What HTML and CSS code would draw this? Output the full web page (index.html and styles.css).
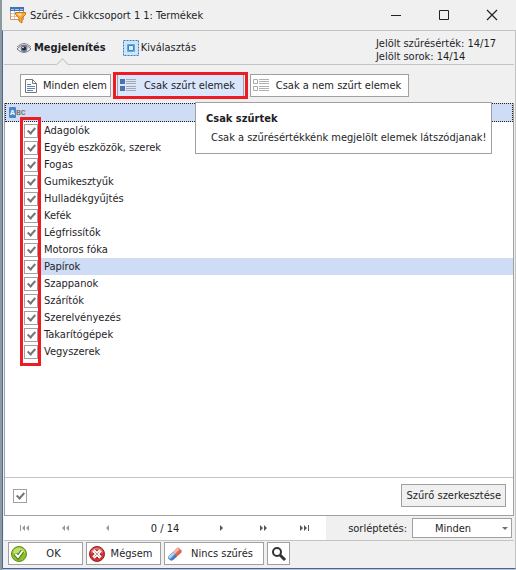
FILE: index.html
```html
<!DOCTYPE html>
<html lang="hu">
<head>
    <meta charset="UTF-8">
    <meta name="viewport" content="width=device-width, initial-scale=1.0">
    <title>Szűrés - Cikkcsoport 1 1: Termékek</title>
    <link rel="stylesheet" href="styles.css">
</head>
<body>
    <div class="window">
        <header class="titlebar">
            <svg class="title-icon" width="18" height="18" viewBox="0 0 18 18">
                <path d="M.5 2.500h13v11H.5z" fill="#fff" stroke="#d9935a"/>
                <path d="M0 1h14v4H0z" fill="#3f74b8"/>
                <path d="M1 3h3v1H1zM5 3h4v1H5zM10 3h3v1h-3z" fill="#a9c8ea"/>
                <path d="M4.500 5v8M9.500 5v8M1 7.500h12M1 10.500h12" stroke="#c3c7cf"/>
                <path d="M5.500 6.500h10v2l-3.500 3.500v5l-3-2v-3l-3.500-3.500z" fill="#f9a935" stroke="#c9731a"/>
                <path d="M7 7.500h5l-2 3z" fill="#ffdf9a"/>
            </svg>
            <span class="title">Szűrés - Cikkcsoport 1 1: Termékek</span>
            <button class="win-button" type="button" aria-label="Kis méret">
                <svg width="12" height="12" viewBox="0 0 12 12"><path d="M1 6.500h10" stroke="#222"/></svg>
            </button>
            <button class="win-button" type="button" aria-label="Teljes méret">
                <svg width="12" height="12" viewBox="0 0 12 12"><path d="M1.500 1.500h9v9h-9z" fill="none" stroke="#222"/></svg>
            </button>
            <button class="win-button" type="button" aria-label="Bezárás">
                <svg width="12" height="12" viewBox="0 0 12 12"><path d="M1 1l10 10M11 1L1 11" stroke="#222" stroke-width="1.200"/></svg>
            </button>
        </header>

        <div class="client">
            <nav class="tabs">
                <button class="tab active" type="button">
                    <svg width="16" height="12" viewBox="0 0 16 12">
                        <path d="M1 7Q8-1 15 7Q8 14 1 7z" fill="#f2f2f4" stroke="#74717a"/>
                        <path d="M1 5Q8-2 15 5" fill="none" stroke="#8d7a74"/>
                        <circle cx="8" cy="6.500" r="3.500" fill="#6d7ea3"/>
                        <circle cx="8" cy="6.500" r="2" fill="#222638"/>
                        <circle cx="7" cy="5.500" r="0.800" fill="#fff"/>
                    </svg>
                    Megjelenítés
                </button>
                <button class="tab" type="button">
                    <svg width="16" height="16" viewBox="0 0 16 16">
                        <path d="M.5.5h15v15H.5z" fill="#c9e6fa" stroke="#4577a8" stroke-dasharray="2 1"/>
                        <path d="M4.500 4.500h7v7h-7z" fill="#9fd0f2" stroke="#6aa5d8"/>
                        <path d="M5.500 5.500h5v5h-5z" fill="#d3ecfc" stroke="#3d80bd"/>
                    </svg>
                    Kiválasztás
                </button>
                <div class="counts">Jelölt szűrésérték: 14/17<br>Jelölt sorok: 14/14</div>
            </nav>

            <div class="toolbar">
                <button class="btn view-all" type="button">
                    <svg width="12" height="14" viewBox="0 0 12 14">
                        <path d="M.5.5h7l4 4v9H.5zM7.500.5v4h4" fill="#fff" stroke="#777"/>
                        <path d="M2 5.500h4M2 7.500h8M2 9.500h8M2 11.500h6" stroke="#5b87b8"/>
                    </svg>
                    <span>Minden elem</span>
                </button>
                <button class="btn view-filtered marked" type="button">
                    <svg width="16" height="13" viewBox="0 0 16 13">
                        <path d="M0 0h5v5H0zM0 7h5v5H0z" fill="#4e70ab"/>
                        <path d="M6 .5h10M6 2.500h10M6 4.500h10M6 7.500h10M6 9.500h10M6 11.500h10" stroke="#a6a8ae"/>
                    </svg>
                    <span>Csak szűrt elemek</span>
                </button>
                <button class="btn view-unfiltered" type="button">
                    <svg width="16" height="13" viewBox="0 0 16 13">
                        <path d="M.5.5h4v4h-4zM.5 7.500h4v4h-4z" fill="#fff" stroke="#aaa"/>
                        <path d="M6 .5h10M6 2.500h10M6 4.500h10M6 7.500h10M6 9.500h10M6 11.500h10" stroke="#b0b0b0"/>
                    </svg>
                    <span>Csak a nem szűrt elemek</span>
                </button>
                <div class="tooltip" role="tooltip">
                    <strong>Csak szűrtek</strong>
                    <p>Csak a szűrésértékkénk megjelölt elemek látszódjanak!</p>
                </div>
            </div>

            <main class="grid">
                <div class="filter-row"><span class="abc-a">A</span><span class="abc-bc">BC</span></div>
                <ul class="items">
                    <li><label><input type="checkbox" checked><span>Adagolók</span></label></li>
                    <li><label><input type="checkbox" checked><span>Egyéb eszközök, szerek</span></label></li>
                    <li><label><input type="checkbox" checked><span>Fogas</span></label></li>
                    <li><label><input type="checkbox" checked><span>Gumikesztyűk</span></label></li>
                    <li><label><input type="checkbox" checked><span>Hulladékgyűjtés</span></label></li>
                    <li><label><input type="checkbox" checked><span>Kefék</span></label></li>
                    <li><label><input type="checkbox" checked><span>Légfrissítők</span></label></li>
                    <li><label><input type="checkbox" checked><span>Motoros fóka</span></label></li>
                    <li class="selected"><label><input type="checkbox" checked><span>Papírok</span></label></li>
                    <li><label><input type="checkbox" checked><span>Szappanok</span></label></li>
                    <li><label><input type="checkbox" checked><span>Szárítók</span></label></li>
                    <li><label><input type="checkbox" checked><span>Szerelvényezés</span></label></li>
                    <li><label><input type="checkbox" checked><span>Takarítógépek</span></label></li>
                    <li><label><input type="checkbox" checked><span>Vegyszerek</span></label></li>
                </ul>
                <div class="grid-footer">
                    <input type="checkbox" aria-label="Szűrő bekapcsolva" checked>
                    <button class="btn edit-filter" type="button">Szűrő szerkesztése</button>
                </div>
            </main>

            <div class="pager">
                <div class="pager-buttons">
                    <button type="button" aria-label="Első" disabled>
                        <svg width="10" height="6" viewBox="0 0 10 6"><path d="M0 0h1v6H0zM5 0v6L2 3zM9 0v6L6 3z"/></svg>
                    </button>
                    <button type="button" aria-label="Előző oldal" disabled>
                        <svg width="8" height="6" viewBox="0 0 8 6"><path d="M3 0v6L0 3zM7 0v6L4 3z"/></svg>
                    </button>
                    <button type="button" aria-label="Előző" disabled>
                        <svg width="4" height="6" viewBox="0 0 4 6"><path d="M3 0v6L0 3z"/></svg>
                    </button>
                    <span class="position">0 / 14</span>
                    <button type="button" aria-label="Következő">
                        <svg width="4" height="6" viewBox="0 0 4 6"><path d="M0 0v6l3-3z"/></svg>
                    </button>
                    <button type="button" aria-label="Következő oldal">
                        <svg width="8" height="6" viewBox="0 0 8 6"><path d="M0 0v6l3-3zM4 0v6l3-3z"/></svg>
                    </button>
                    <button type="button" aria-label="Utolsó">
                        <svg width="10" height="6" viewBox="0 0 10 6"><path d="M0 0v6l3-3zM4 0v6l3-3zM8 0h1v6H8z"/></svg>
                    </button>
                </div>
                <label for="step">sorléptetés:</label>
                <div class="select-box">
                    <select id="step"><option>Minden</option></select>
                </div>
            </div>

            <footer class="actions">
                <button class="btn action" type="button">
                    <svg width="16" height="16" viewBox="0 0 16 16">
                        <circle cx="8" cy="8" r="7.500" fill="#8fbf2b" stroke="#5e8d16"/>
                        <path d="M2 7a6 5.500 0 0 1 12 0Q8 9 2 7z" fill="#bfe06c"/>
                        <path d="M4.500 8l2.500 3 4.500-6" fill="none" stroke="#4b7a12" stroke-width="4"/>
                        <path d="M4.500 8l2.500 3 4.500-6" fill="none" stroke="#fff" stroke-width="2"/>
                    </svg>
                    <span>OK</span>
                </button>
                <button class="btn action" type="button">
                    <svg width="16" height="16" viewBox="0 0 16 16">
                        <circle cx="8" cy="8" r="7.500" fill="#cf3330" stroke="#9c2222"/>
                        <path d="M2 7a6 5.500 0 0 1 12 0Q8 9 2 7z" fill="#e5736c"/>
                        <path d="M5 5l6 6M11 5l-6 6" stroke="#8e1b1b" stroke-width="5"/>
                        <path d="M4.500 4.500l7 7M11.500 4.500l-7 7" stroke="#fff" stroke-width="3.500"/>
                        <path d="M5.500 5.500l5 5M10.500 5.500l-5 5" stroke="#d98f8c"/>
                    </svg>
                    <span>Mégsem</span>
                </button>
                <button class="btn action wide" type="button">
                    <svg width="16" height="16" viewBox="0 0 16 16">
                        <path d="M1 11L10 2Q11 1 12 2L14.500 4.500Q15 6 14 7L6 14Q4 15 2.500 13.500L1 12z" fill="#e0644a"/>
                        <path d="M1 11L6 6l4 4.500L6 14Q4 15 2.500 13.500L1 12z" fill="#3f80cc"/>
                        <path d="M1 11L6 6l2 2-5 5z" fill="#a9d2f5"/>
                        <path d="M6 6l4.500-4.500 2 2L8 8z" fill="#f6b7a4"/>
                    </svg>
                    <span>Nincs szűrés</span>
                </button>
                <button class="btn search" type="button" aria-label="Keresés">
                    <svg width="16" height="16" viewBox="0 0 16 16">
                        <circle cx="6" cy="6" r="4" fill="none" stroke="#333" stroke-width="2"/>
                        <path d="M9 9l5 5" stroke="#333" stroke-width="3"/>
                    </svg>
                </button>
            </footer>
        </div>
    </div>
</body>
</html>
```

FILE: styles.css
```css
*, *::before, *::after {
    box-sizing: border-box;
}

body {
    margin: 0;
    padding-left: 2px;
    background: #8b9b9d;
    color: #1e1e28;
    font-family: "DejaVu Sans Condensed", "Noto Sans", sans-serif;
    font-size: 11px;
    line-height: 13px;
}

button, select, input {
    font: inherit;
    color: inherit;
    margin: 0;
}

button {
    border: 0;
    padding: 0;
    background: none;
}

svg {
    display: block;
    flex: none;
}

.window {
    display: flex;
    flex-direction: column;
    min-height: 100vh;
    background: #f0f0f0;
    border-bottom: 1px solid #c4c4c8;
}

.titlebar {
    display: flex;
    align-items: center;
    height: 30px;
    padding-left: 8px;
}

.title {
    flex: 1;
    padding-left: 2px;
}

.win-button {
    display: flex;
    align-items: center;
    justify-content: center;
    width: 48px;
    height: 30px;
}

.client {
    flex: 1;
    display: flex;
    flex-direction: column;
    padding: 0 1px 3px;
    border-top: 1px solid #c3c3c3;
    border-right: 1px solid #c3c3c3;
    border-left: 1px solid #4a6a9d;
    border-bottom: 1px solid #3e66a5;
}

/* tabs */
.tabs {
    display: flex;
    align-items: center;
    gap: 17px;
    height: 34px;
    padding: 0 18px 0 12px;
    border-bottom: 1px solid #c3c3c3;
}

.tab {
    position: relative;
    display: flex;
    align-items: center;
    gap: 2px;
    height: 33px;
}

.tab.active {
    font-weight: bold;
}

.tab.active::after {
    content: "";
    position: absolute;
    left: 42px;
    bottom: -5px;
    width: 9px;
    height: 9px;
    background: #f0f0f0;
    border-top: 1px solid #c3c3c3;
    border-left: 1px solid #c3c3c3;
    transform: rotate(45deg);
}

.counts {
    margin-left: auto;
    padding-top: 5px;
}

/* toolbar */
.btn {
    display: flex;
    align-items: center;
    height: 23px;
    border: 1px solid #a0a0a0;
    background: #fff;
    white-space: nowrap;
}

.btn span {
    flex: 1;
    text-align: center;
}

.toolbar {
    position: relative;
    display: flex;
    gap: 6px;
    padding: 9px 16px 6px;
}

.view-all {
    width: 91px;
    padding-left: 4px;
}

.view-all span {
    padding-left: 3px;
}

.view-filtered {
    position: relative;
    width: 127px;
    padding-left: 2px;
    background: #dae6fb;
}

.view-unfiltered {
    width: 159px;
    padding-left: 2px;
}

.marked::after {
    content: "";
    position: absolute;
    inset: -3px -5px -3px -5px;
    border: 3px solid #ed1c24;
}

.tooltip {
    position: absolute;
    z-index: 2;
    top: 37px;
    left: 191px;
    padding: 9px 4px 9px 10px;
    background: #fff;
    border: 1px solid #a0a0a0;
    white-space: nowrap;
}

.tooltip p {
    margin: 6px 0 0 5px;
}

/* list */
.grid {
    flex: 1;
    display: flex;
    flex-direction: column;
    background: #fff;
    border: 1px solid #a0a0a0;
    border-top: 0;
}

.filter-row {
    display: flex;
    align-items: center;
    height: 19px;
    padding-left: 3px;
    background: #cfdcf5;
    border: 1px dotted #222;
    font-family: "Liberation Mono", monospace;
    font-size: 8px;
    font-weight: bold;
    line-height: 11px;
    color: #777;
}

.abc-a {
    width: 7px;
    border-radius: 1px;
    background: #4a86c5;
    color: #fff;
    text-align: center;
}

.items {
    position: relative;
    flex: 1;
    margin: 0;
    padding: 0;
    list-style: none;
}

.items::after {
    content: "";
    position: absolute;
    top: -5px;
    left: 15px;
    width: 21px;
    height: 249px;
    border: 3px solid #ed1c24;
}

.items label {
    display: flex;
    align-items: center;
    height: 17px;
    padding-left: 19px;
}

.items span {
    flex: 1;
    padding: 2px 0 2px 3px;
    margin-left: 3px;
}

.selected span {
    background: #cfdcf5;
}

input[type="checkbox"] {
    appearance: none;
    display: grid;
    place-items: center;
    width: 14px;
    height: 14px;
    border: 1px solid #a0a0a0;
    background: #fff;
}

input[type="checkbox"]:checked::before {
    content: "";
    width: 5px;
    height: 8px;
    margin-bottom: 2px;
    border: solid #777;
    border-width: 0 2px 2px 0;
    transform: rotate(42deg);
}

.grid-footer {
    display: flex;
    align-items: center;
    justify-content: space-between;
    height: 38px;
    padding: 0 7px 2px 8px;
    border-top: 1px solid #c3c3c3;
}

.edit-filter {
    padding: 0 4px;
    background: #f0f0f0;
}

/* pager */
.pager {
    display: flex;
    align-items: center;
    height: 25px;
    border-bottom: 1px solid #c3c3c3;
}

.pager-buttons {
    flex: 1;
    display: flex;
    align-items: center;
    align-self: stretch;
    background: #fff;
}

.pager-buttons button {
    flex: 1;
    display: flex;
    align-items: center;
    justify-content: center;
    fill: #555;
}

.pager-buttons button:disabled {
    fill: #999;
}

.position {
    width: 73px;
    text-align: center;
}

.pager label {
    padding: 0 5px 0 22px;
}

.select-box {
    position: relative;
    margin-right: 2px;
}

.select-box::after {
    content: "";
    position: absolute;
    top: 9px;
    right: 4px;
    border: 3px solid transparent;
    border-top-color: #707070;
    pointer-events: none;
}

.pager select {
    appearance: none;
    display: block;
    width: 100px;
    height: 20px;
    padding: 0 18px 0 0;
    border: 1px solid #a0a0a0;
    border-radius: 0;
    background: #fff;
    text-align: center;
    text-align-last: center;
}

/* bottom buttons */
.actions {
    display: flex;
    gap: 3px;
    padding: 1px 4px 0;
}

.action {
    width: 75px;
    padding: 0 2px;
}

.action.wide {
    width: 100px;
}

.search {
    justify-content: center;
    width: 23px;
}
```
